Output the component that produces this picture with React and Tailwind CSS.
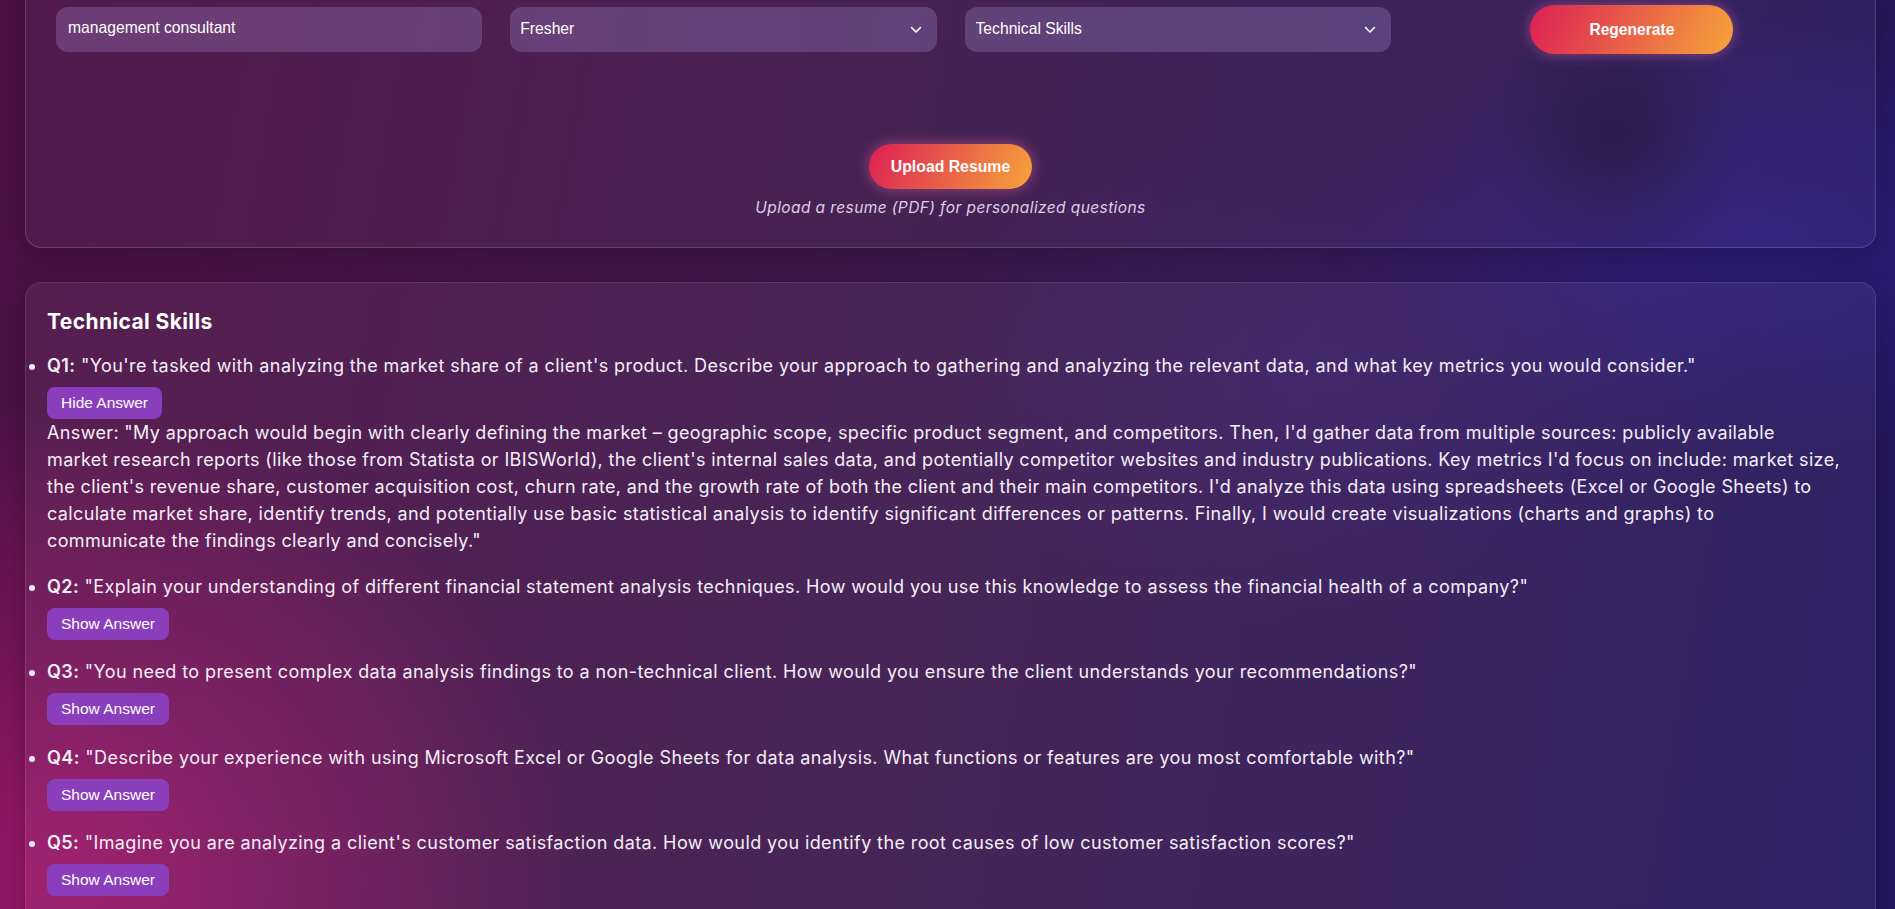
import React, { useState } from 'react';

// answer kept in the line breaks the original layout shows
const questions = [
    {
        id: 1,
        text: '"You\'re tasked with analyzing the market share of a client\'s product. Describe your approach to gathering and analyzing the relevant data, and what key metrics you would consider."',
        answer: [
            'Answer: "My approach would begin with clearly defining the market – geographic scope, specific product segment, and competitors. Then, I\'d gather data from multiple sources: publicly available',
            'market research reports (like those from Statista or IBISWorld), the client\'s internal sales data, and potentially competitor websites and industry publications. Key metrics I\'d focus on include: market size,',
            'the client\'s revenue share, customer acquisition cost, churn rate, and the growth rate of both the client and their main competitors. I\'d analyze this data using spreadsheets (Excel or Google Sheets) to',
            'calculate market share, identify trends, and potentially use basic statistical analysis to identify significant differences or patterns. Finally, I would create visualizations (charts and graphs) to',
            'communicate the findings clearly and concisely."',
        ],
    },
    {
        id: 2,
        text: '"Explain your understanding of different financial statement analysis techniques. How would you use this knowledge to assess the financial health of a company?"',
        answer: [],
    },
    {
        id: 3,
        text: '"You need to present complex data analysis findings to a non-technical client. How would you ensure the client understands your recommendations?"',
        answer: [],
    },
    {
        id: 4,
        text: '"Describe your experience with using Microsoft Excel or Google Sheets for data analysis. What functions or features are you most comfortable with?"',
        answer: [],
    },
    {
        id: 5,
        text: '"Imagine you are analyzing a client\'s customer satisfaction data. How would you identify the root causes of low customer satisfaction scores?"',
        answer: [],
    },
];

const Chevron = () => (
    <svg width="12" height="8" viewBox="0 0 12 8" fill="none" className="pointer-events-none absolute right-[15px] top-1/2 -translate-y-1/2">
        <path d="M1.5 1.5 6 6l4.5-4.5" stroke="#ffffff" strokeWidth="1.6" strokeLinecap="round" strokeLinejoin="round" />
    </svg>
);

const QuestionItem = ({ q, open, onToggle }) => (
    <li className="mb-[18.5px]">
        <div className="leading-[27px]">
            <span className="font-semibold">Q{q.id}:</span> {q.text}
        </div>
        <button
            onClick={onToggle}
            className="mt-2 h-8 px-[14px] rounded-lg bg-[#8a3ebb] text-white text-[15.5px] tracking-normal font-['Liberation_Sans',Arial,sans-serif] block"
        >
            {open ? 'Hide Answer' : 'Show Answer'}
        </button>
        {open && (
            <p className="leading-[27px] tracking-[0.02em]">
                {q.answer.map((line, i) => (
                    <React.Fragment key={i}>
                        {line}
                        {i < q.answer.length - 1 && <br />}
                    </React.Fragment>
                ))}
            </p>
        )}
    </li>
);

export default function App() {
    const [openId, setOpenId] = useState(1);

    return (
        <div className="min-h-screen overflow-hidden pl-[25px] pr-[19px] font-['Inter',sans-serif] tracking-[0.025em] text-[#f4eef6] bg-[radial-gradient(circle_at_1615px_135px,rgba(28,14,50,0.6),transparent_130px),radial-gradient(ellipse_420px_220px_at_1760px_240px,rgba(50,36,160,0.5),transparent),radial-gradient(ellipse_520px_480px_at_60px_880px,rgba(190,25,120,0.7),transparent),radial-gradient(ellipse_420px_260px_at_1330px_370px,rgba(70,45,150,0.25),transparent),linear-gradient(100deg,#4f1146_0%,#3e1a4e_50%,#22175f_100%)]">

            {/* FORM CARD (page scrolled a bit) */}
            <section className="-mt-[24px] rounded-2xl border border-white/15 bg-white/[0.04] px-[30px] pt-[30px] pb-[27px] shadow-[0_8px_30px_rgba(0,0,0,0.25)]">
                <div className="grid grid-cols-4 gap-[28px] items-start">
                    <input
                        readOnly
                        value="management consultant"
                        className="h-[45px] rounded-xl bg-[#c4b5fd]/[0.22] px-3 pb-[3px] text-[15.7px] tracking-normal text-white outline-none font-['Liberation_Sans',Arial,sans-serif]"
                    />
                    <div className="relative">
                        <select className="w-full h-[45px] appearance-none rounded-xl bg-[#c4b5fd]/[0.22] pl-[10px] pr-8 pb-[2px] text-[15.7px] tracking-normal text-white outline-none font-['Liberation_Sans',Arial,sans-serif]">
                            <option>Fresher</option>
                        </select>
                        <Chevron />
                    </div>
                    <div className="relative">
                        <select className="w-full h-[45px] appearance-none rounded-xl bg-[#c4b5fd]/[0.22] pl-[11px] pr-8 pb-[2px] text-[15.7px] tracking-normal text-white outline-none font-['Liberation_Sans',Arial,sans-serif]">
                            <option>Technical Skills</option>
                        </select>
                        <Chevron />
                    </div>
                    <div className="flex justify-center -mt-[2px]">
                        <button className="h-[49px] w-[203px] rounded-full bg-[linear-gradient(115deg,#dc1f55,#f7a43a)] text-white font-bold text-[15.6px] tracking-normal font-['Liberation_Sans',Arial,sans-serif] shadow-[0_0_14px_rgba(255,120,170,0.45)]">
                            Regenerate
                        </button>
                    </div>
                </div>

                <div className="mt-[90px] flex flex-col items-center">
                    <button className="h-[45px] px-[22px] rounded-full bg-[linear-gradient(115deg,#dc1f55,#f7a43a)] text-white font-bold text-[15.8px] tracking-normal font-['Liberation_Sans',Arial,sans-serif] shadow-[0_0_14px_rgba(255,120,170,0.45)]">
                        Upload Resume
                    </button>
                    <p className="mt-[7px] text-[15.5px] leading-6 italic text-[#ddd0e4]">
                        Upload a resume (PDF) for personalized questions
                    </p>
                </div>
            </section>

            {/* QUESTIONS CARD */}
            <section className="mt-[34px] rounded-2xl border border-white/10 bg-white/[0.05] px-[21px] pb-[21px] pt-[24px] shadow-[0_8px_30px_rgba(0,0,0,0.25)]">
                <h2 className="text-[21px] leading-[30px] font-bold text-white">Technical Skills</h2>
                <ul className="mt-[15px] list-disc text-[18px]">
                    {questions.map((q) => (
                        <QuestionItem
                            key={q.id}
                            q={q}
                            open={openId === q.id}
                            onToggle={() => setOpenId(openId === q.id ? null : q.id)}
                        />
                    ))}
                </ul>
            </section>
        </div>
    );
}
